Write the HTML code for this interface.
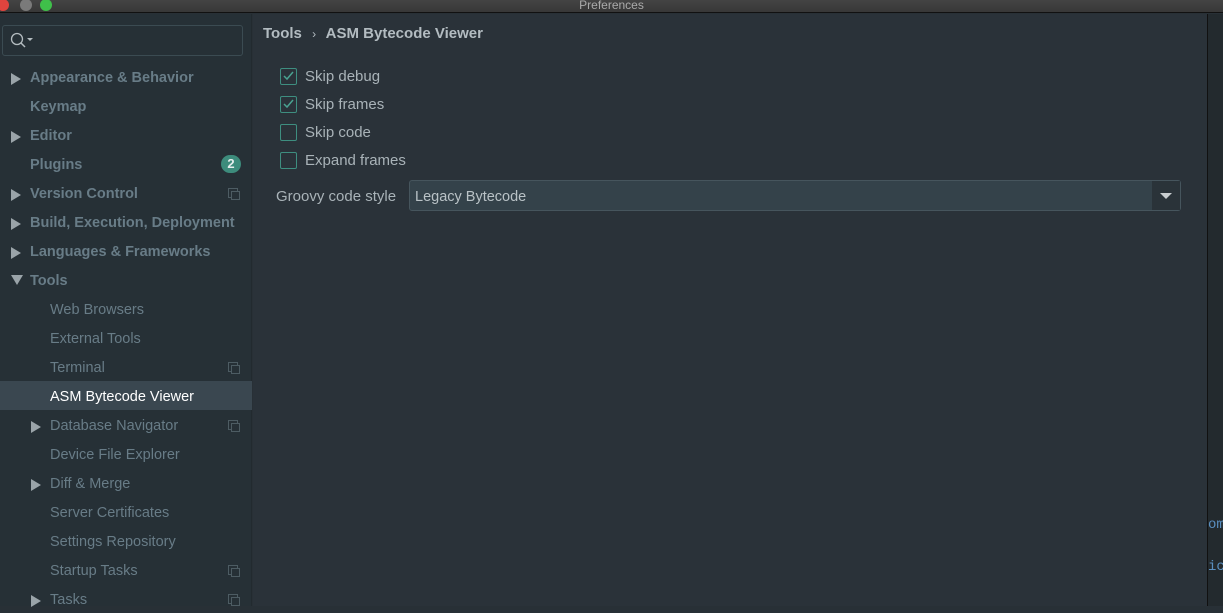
<!DOCTYPE html>
<html><head><style>
*{margin:0;padding:0;box-sizing:border-box}
body{width:1223px;height:606px;overflow:hidden;background:#283036;font-family:"Liberation Sans",sans-serif;position:relative}
#title{position:absolute;left:0;top:0;width:1223px;height:13px;background:linear-gradient(#444,#383838);border-bottom:1px solid #111;color:#aaa;font-size:12px;text-align:center;line-height:11px}
.dot{position:absolute;top:-1px;width:12px;height:12px;border-radius:50%}
#side{position:absolute;left:0;top:14px;width:252px;height:592px;background:#263036;border-right:1px solid #222a2f}
#search{position:absolute;left:2px;top:11px;width:241px;height:31px;border:1px solid #3b4b52;border-radius:3px;background:#263036}
.it{position:absolute;left:0;width:252px;height:29px;line-height:29px;font-size:14.5px;color:#687c87}
.it span.t{position:relative;top:2px}
.b{font-weight:bold;padding-left:30px}
.s{padding-left:50px}
.arr{position:absolute;top:11px;width:0;height:0;border-left:10px solid #9aa4a9;border-top:6px solid transparent;border-bottom:6px solid transparent}
.cp{position:absolute;right:14px;top:10px;width:10px;height:10px;border:1px solid #4d5c63}
.cp:after{content:"";position:absolute;left:2px;top:2px;width:7px;height:7px;border:1px solid #4d5c63;background:#263036}
.cb{position:absolute;left:280px;width:17px;height:17px;border:1.5px solid #3e8e80;border-radius:2px}
.lbl{position:absolute;left:305px;font-size:15px;color:#a9b3b8}
</style></head><body>
<div id="title">Preferences
<div class="dot" style="left:-3px;background:#e0443e"></div>
<div class="dot" style="left:20px;background:#7a7a7a"></div>
<div class="dot" style="left:40px;background:#3fc04a"></div>
</div>
<div id="side">
<div id="search"><svg width="30" height="30" style="position:absolute;left:4px;top:2px"><circle cx="10" cy="11" r="5.5" fill="none" stroke="#b4bcc0" stroke-width="1.3"/><line x1="14" y1="15" x2="18" y2="19" stroke="#b4bcc0" stroke-width="1.5"/><path d="M20 10h6l-3 3z" fill="#b4bcc0"/></svg></div>
<div class="it b" style="top:48px"><span class="arr" style="left:11px"></span><span class="t">Appearance &amp; Behavior</span></div>
<div class="it b" style="top:77px"><span class="t">Keymap</span></div>
<div class="it b" style="top:106px"><span class="arr" style="left:11px"></span><span class="t">Editor</span></div>
<div class="it b" style="top:135px"><span class="t">Plugins</span><span style="position:absolute;left:221px;top:6px;width:20px;height:18px;border-radius:9px;background:#3d8c7c;color:#e6eeee;font-size:13px;line-height:18px;text-align:center">2</span></div>
<div class="it b" style="top:164px"><span class="arr" style="left:11px"></span><span class="t">Version Control</span><span class="cp"></span></div>
<div class="it b" style="top:193px"><span class="arr" style="left:11px"></span><span class="t">Build, Execution, Deployment</span></div>
<div class="it b" style="top:222px"><span class="arr" style="left:11px"></span><span class="t">Languages &amp; Frameworks</span></div>
<div class="it b" style="top:251px"><span class="arr" style="left:11px;top:10px;border-left:6px solid transparent;border-right:6px solid transparent;border-top:10px solid #9aa4a9;border-bottom:0"></span><span class="t">Tools</span></div>
<div class="it s" style="top:280px"><span class="t">Web Browsers</span></div>
<div class="it s" style="top:309px"><span class="t">External Tools</span></div>
<div class="it s" style="top:338px"><span class="t">Terminal</span><span class="cp"></span></div>
<div class="it s" style="top:367px;background:#3a4750;color:#fff"><span class="t">ASM Bytecode Viewer</span></div>
<div class="it s" style="top:396px"><span class="arr" style="left:31px"></span><span class="t">Database Navigator</span><span class="cp"></span></div>
<div class="it s" style="top:425px"><span class="t">Device File Explorer</span></div>
<div class="it s" style="top:454px"><span class="arr" style="left:31px"></span><span class="t">Diff &amp; Merge</span></div>
<div class="it s" style="top:483px"><span class="t">Server Certificates</span></div>
<div class="it s" style="top:512px"><span class="t">Settings Repository</span></div>
<div class="it s" style="top:541px"><span class="t">Startup Tasks</span><span class="cp"></span></div>
<div class="it s" style="top:570px"><span class="arr" style="left:31px"></span><span class="t">Tasks</span><span class="cp"></span></div>
</div>
<div style="position:absolute;left:253px;top:14px;width:954px;height:592px;background:#2a3239"></div>
<div style="position:absolute;left:263px;top:25px;font-size:15px;font-weight:bold;color:#b3bcc1">Tools <span style="font-weight:normal;font-size:12px;margin:0 6px">›</span> ASM Bytecode Viewer</div>
<div class="cb" style="top:68px"><svg width="14" height="14" style="position:absolute;left:0;top:0"><path d="M3 7l3 3 6-7" fill="none" stroke="#4aa291" stroke-width="1.5"/></svg></div>
<div class="lbl" style="top:68px">Skip debug</div>
<div class="cb" style="top:96px"><svg width="14" height="14" style="position:absolute;left:0;top:0"><path d="M3 7l3 3 6-7" fill="none" stroke="#4aa291" stroke-width="1.5"/></svg></div>
<div class="lbl" style="top:96px">Skip frames</div>
<div class="cb" style="top:124px"></div>
<div class="lbl" style="top:124px">Skip code</div>
<div class="cb" style="top:152px"></div>
<div class="lbl" style="top:152px">Expand frames</div>
<div class="lbl" style="left:276px;top:188px">Groovy code style</div>
<div style="position:absolute;left:409px;top:180px;width:772px;height:31px;border:1px solid #46555d;border-radius:3px;background:#34424a">
<div style="position:absolute;left:5px;top:8px;font-size:14.5px;color:#b9c2c6">Legacy Bytecode</div>
<div style="position:absolute;right:0;top:0;width:28px;height:29px;background:#2a3339"><div style="position:absolute;left:8px;top:12px;border-left:6px solid transparent;border-right:6px solid transparent;border-top:6px solid #c8cdd0"></div></div>
</div>
<div style="position:absolute;left:1207px;top:14px;width:1px;height:592px;background:#111"></div>
<div style="position:absolute;left:1208px;top:14px;width:15px;height:592px;background:#232a2e;font-family:'Liberation Mono',monospace;font-size:14px;color:#5a8fc0">
<div style="position:absolute;left:0;top:503px">om</div>
<div style="position:absolute;left:0;top:545px">ic</div>
</div>
</body></html>
